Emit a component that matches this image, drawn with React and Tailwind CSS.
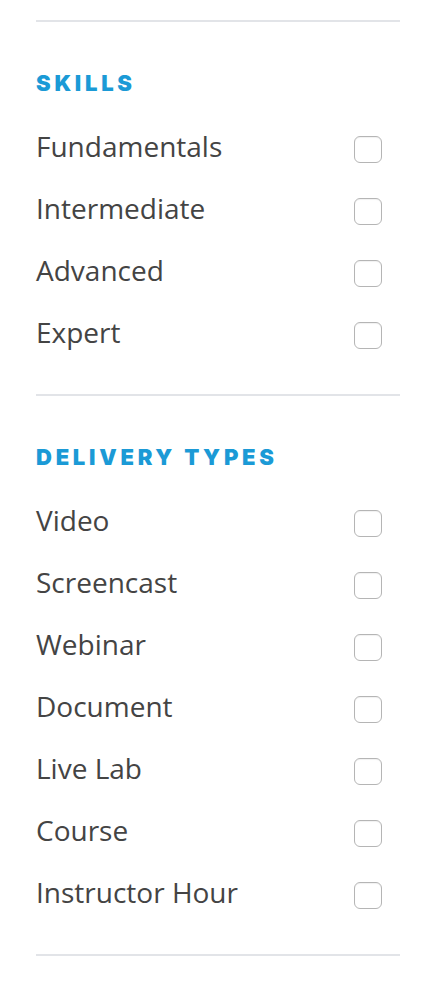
import React from "react";

const sections = [
  { title: "SKILLS", items: ["Fundamentals", "Intermediate", "Advanced", "Expert"] },
  {
    title: "DELIVERY TYPES",
    items: ["Video", "Screencast", "Webinar", "Document", "Live Lab", "Course", "Instructor Hour"],
  },
];

function Row({ label }) {
  return (
    <div className="flex h-[62px] items-center justify-between">
      <span
        className="text-[28px] leading-none text-[#444444] pb-[7px]"
        style={{ fontFamily: '"Open Sans", sans-serif' }}
      >
        {label}
      </span>
      <span className="mr-[18px] block h-[27px] w-[28px] rounded-[6px] border border-[#b5b5b5] bg-white shadow-[inset_0_1px_1px_rgba(0,0,0,0.06)]" />
    </div>
  );
}

export default function App() {
  return (
    <div className="min-h-[992px] w-[434px] bg-white pt-[20px]">
      <div className="ml-[36px] w-[364px]">
        <div className="h-[2px] bg-[#e2e4e8]" />
        {sections.map((s) => (
          <div key={s.title}>
            <div className="pt-[46px]">
              <div
                className="flex h-[30px] items-center text-[22px] font-black tracking-[0.17em] text-[#1b9ad6]"
                style={{ fontFamily: 'Inter, "Noto Sans", sans-serif' }}
              >
                {s.title}
              </div>
              <div className="mt-[20px]">
                {s.items.map((it) => (
                  <Row key={it} label={it} />
                ))}
              </div>
            </div>
            <div className="mt-[28px] h-[2px] bg-[#e2e4e8]" />
          </div>
        ))}
      </div>
    </div>
  );
}
